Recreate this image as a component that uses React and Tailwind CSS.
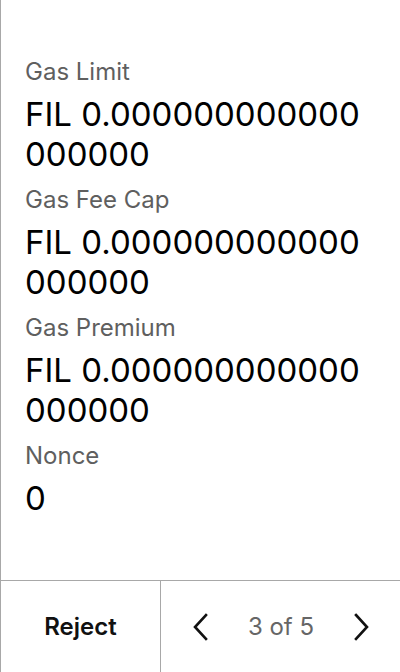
import React from 'react';

const fields = [
  { label: 'Gas Limit', value: 'FIL 0.000000000000000000' },
  { label: 'Gas Fee Cap', value: 'FIL 0.000000000000000000' },
  { label: 'Gas Premium', value: 'FIL 0.000000000000000000' },
  { label: 'Nonce', value: '0' },
];

function Chevron({ dir }) {
  return (
    <svg width="16" height="28" viewBox="0 0 16 28" fill="none" stroke="#111" strokeWidth="2.6" strokeLinecap="square" strokeLinejoin="miter">
      {dir === 'left' ? <path d="M14 2L3 14l11 12" /> : <path d="M2 2l11 12L2 26" />}
    </svg>
  );
}

export default function App() {
  return (
    <div className="w-[400px] h-[672px] flex flex-col bg-white border-l border-[#a8a8a8] font-['Inter',sans-serif]">
      <div className="flex-1 px-6 pt-[58px]">
        {fields.map((f) => (
          <div key={f.label} className="mb-3">
            <div className="text-[24px] leading-[28px] text-[#5f5f5f]">{f.label}</div>
            <div className="mt-2 text-[33px] leading-[40px] text-black break-all">{f.value}</div>
          </div>
        ))}
      </div>
      <div className="h-[92px] flex border-t border-[#a8a8a8]">
        <button className="w-[159px] flex items-center justify-center text-[24px] font-semibold text-[#111]">
          Reject
        </button>
        <div className="flex-1 flex items-center justify-between border-l border-[#a8a8a8] pl-[31px] pr-[30px]">
          <Chevron dir="left" />
          <span className="text-[24px] text-[#666]">3 of 5</span>
          <Chevron dir="right" />
        </div>
      </div>
    </div>
  );
}
